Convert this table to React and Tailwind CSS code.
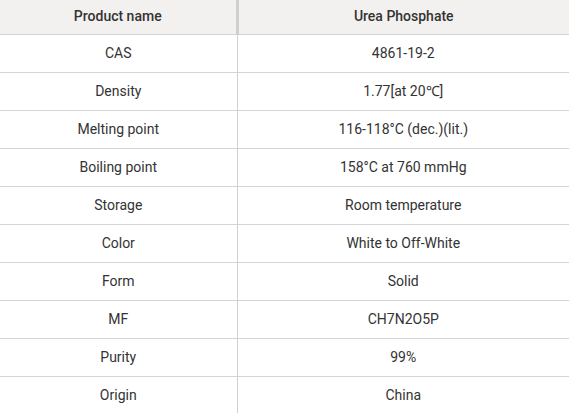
import React from 'react';

const rows = [
  ['CAS', '4861-19-2'],
  ['Density', '1.77[at 20℃]'],
  ['Melting point', '116-118°C (dec.)(lit.)'],
  ['Boiling point', '158°C at 760 mmHg'],
  ['Storage', 'Room temperature'],
  ['Color', 'White to Off-White'],
  ['Form', 'Solid'],
  ['MF', 'CH7N2O5P'],
  ['Purity', '99%'],
  ['Origin', 'China'],
];

export default function App() {
  return (
    <div className="w-[569px] h-[413px] overflow-hidden bg-white font-['Roboto',sans-serif] text-[14px]">
      <table className="w-full border-collapse table-fixed">
        <colgroup>
          <col className="w-[237px]" />
          <col />
        </colgroup>
        <thead>
          <tr className="h-[34px] bg-[#f3f1ef] border-b border-[#d4d4d4]">
            <th className="font-medium text-[#333] text-center border-r-[3px] border-r-[#d0d0d0] p-0">Product name</th>
            <th className="font-medium text-[#333] text-center p-0">Urea Phosphate</th>
          </tr>
        </thead>
        <tbody>
          {rows.map(([k, v]) => (
            <tr key={k} className="h-[38px] border-b border-[#d4d4d4]">
              <td className="text-center text-[#333] border-r border-r-[#d0d0d0] p-0">{k}</td>
              <td className="text-center text-[#333] p-0">{v}</td>
            </tr>
          ))}
        </tbody>
      </table>
    </div>
  );
}
